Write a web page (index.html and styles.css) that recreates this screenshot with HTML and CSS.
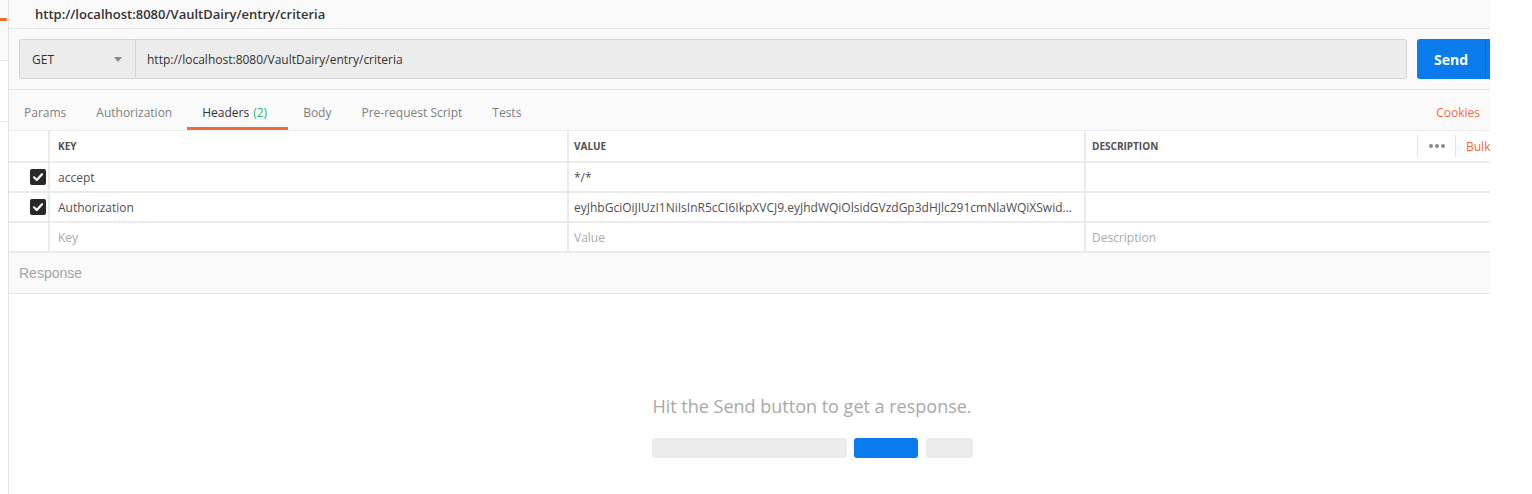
FILE: index.html
```html
<!DOCTYPE html>
<html lang="en">
<head>
<meta charset="utf-8">
<title>Postman request</title>
<link rel="stylesheet" href="styles.css">
</head>
<body>
<div class="app">
  <aside class="sidebar">
    <div class="side-top"><div class="side-mark"></div></div>
    <div class="side-item"></div>
  </aside>
  <main class="main">
    <div class="titlebar">http://localhost:8080/VaultDairy/entry/criteria</div>
    <div class="urlrow">
      <div class="method">GET<span class="caret"></span></div>
      <div class="urlinput">http://localhost:8080/VaultDairy/entry/criteria</div>
      <div class="send"><span class="send-main">Send</span><span class="send-drop"></span></div>
    </div>
    <div class="tabs">
      <div class="tab">Params</div>
      <div class="tab">Authorization</div>
      <div class="tab active">Headers <span class="count">(2)</span></div>
      <div class="tab">Body</div>
      <div class="tab">Pre-request Script</div>
      <div class="tab">Tests</div>
      <div class="tab-right">
        <span class="link">Cookies</span>
        <span class="link clip">Code</span>
      </div>
    </div>
    <div class="table">
      <div class="row head">
        <div class="cell chk"></div>
        <div class="cell key">KEY</div>
        <div class="cell val">VALUE</div>
        <div class="cell desc">DESCRIPTION
          <div class="head-tools">
            <span class="sep"></span>
            <span class="dots"><i></i><i></i><i></i></span>
            <span class="sep"></span>
            <span class="link clip bulk">Bulk Edit</span>
          </div>
        </div>
      </div>
      <div class="row">
        <div class="cell chk"><span class="box"><svg width="16" height="16" viewBox="0 0 16 16"><path d="M4 8.3 L6.8 11 L12 5.2" fill="none" stroke="#fff" stroke-width="2.2" stroke-linecap="round" stroke-linejoin="round"/></svg></span></div>
        <div class="cell key">accept</div>
        <div class="cell val">*/*</div>
        <div class="cell desc"></div>
      </div>
      <div class="row">
        <div class="cell chk"><span class="box"><svg width="16" height="16" viewBox="0 0 16 16"><path d="M4 8.3 L6.8 11 L12 5.2" fill="none" stroke="#fff" stroke-width="2.2" stroke-linecap="round" stroke-linejoin="round"/></svg></span></div>
        <div class="cell key">Authorization</div>
        <div class="cell val">eyJhbGciOiJIUzI1NiIsInR5cCI6IkpXVCJ9.eyJhdWQiOlsidGVzdGp3dHJlc291cmNlaWQiXSwid...</div>
        <div class="cell desc"></div>
      </div>
      <div class="row">
        <div class="cell chk"></div>
        <div class="cell key ph">Key</div>
        <div class="cell val ph">Value</div>
        <div class="cell desc ph">Description</div>
      </div>
    </div>
    <div class="response">Response</div>
    <div class="empty">
      <div class="empty-text">Hit the Send button to get a response.</div>
      <div class="bars">
        <span class="bar gray wide"></span>
        <span class="bar blue"></span>
        <span class="bar gray small"></span>
      </div>
    </div>
  </main>
</div>
</body>
</html>
```
FILE: styles.css
```css
* { box-sizing: border-box; }
html, body { margin: 0; padding: 0; background: #fff; }
body { font-family: "Open Sans", "Liberation Sans", sans-serif; color: #505050; }

.app { display: flex; height: 494px; overflow: hidden; }

.sidebar { width: 9px; flex: none; border-right: 1px solid #e2e2e2; background: #fff; }
.side-top { height: 61px; background: #fafafa; border-bottom: 1px solid #e6e6e6; padding-top: 18px; }
.side-mark { height: 3px; width: 7px; background: #f26b3a; }
.side-item { height: 61px; border-bottom: 1px solid #e6e6e6; }

.main { width: 1481px; flex: none; overflow: hidden; display: flex; flex-direction: column; background: #fff; }

.titlebar { height: 29px; line-height: 28px; padding-left: 26px; background: #fafafa; border-bottom: 1px solid #e6e6e6; font-size: 13px; font-weight: 600; color: #333; white-space: nowrap; }

.urlrow { display: flex; height: 61px; padding: 10px 0 10px 10px; background: #fafafa; border-bottom: 1px solid #e6e6e6; }
.method { width: 116px; flex: none; height: 40px; display: flex; align-items: center; justify-content: space-between; padding: 0 13px 0 12px; background: #ececec; border: 1px solid #d6d6d6; border-right: none; border-radius: 3px 0 0 3px; font-size: 12px; color: #333; }
.caret { width: 0; height: 0; border-left: 4px solid transparent; border-right: 4px solid transparent; border-top: 5px solid #888; }
.urlinput { width: 1272px; flex: none; height: 40px; display: flex; align-items: center; padding-left: 11px; background: #ececec; border: 1px solid #d6d6d6; border-radius: 0 3px 3px 0; font-size: 12px; color: #333; white-space: nowrap; }
.send { flex: none; margin-left: 10px; width: 100px; height: 40px; display: flex; background: #097bed; border-radius: 3px; color: #fff; }
.send-main { width: 69px; display: flex; align-items: center; justify-content: center; font-size: 14px; font-weight: 700; border-right: 1px solid #0a66c6; }
.send-drop { flex: 1; }

.tabs { display: flex; height: 40px; background: #fafafa; }
.tab { height: 40px; padding: 7px 15px 0; border-bottom: 3px solid transparent; display: flex; align-items: center; font-size: 12px; color: #808080; white-space: nowrap; }
.tab.active { border-bottom-color: #f26b3a; color: #333; }
.count { color: #26b47f; margin-left: 4px; margin-right: 6px; }
.tab-right { margin-left: auto; display: flex; align-items: center; gap: 10px; padding-top: 7px; padding-bottom: 3px; }
.link { font-size: 12px; color: #f26b3a; white-space: nowrap; }
.clip { width: 0; overflow: visible; }

.table { border-top: 1px solid #ececec; background: #fff; }
.row { display: flex; height: 30px; border-bottom: 2px solid #ebebeb; }
.row.head { height: 32px; }
.cell { display: flex; align-items: center; font-size: 12px; color: #505050; white-space: nowrap; overflow: hidden; border-right: 2px solid #ebebeb; }
.cell.chk { width: 41px; flex: none; justify-content: flex-end; padding-right: 2px; }
.cell.key { width: 519px; flex: none; padding-left: 8px; }
.cell.val { width: 517px; flex: none; padding-left: 5px; }
.cell.desc { flex: 1; padding-left: 6px; border-right: none; position: relative; overflow: visible; }
.row.head .cell { font-size: 10px; font-weight: 700; color: #505050; }
.cell.ph { color: #aaa; }
.box { width: 16px; height: 16px; background: #282828; border-radius: 2px; display: flex; }

.head-tools { margin-left: auto; display: flex; align-items: center; height: 100%; }
.sep { width: 1px; height: 22px; background: #e3e3e3; }
.dots { display: flex; gap: 2px; padding: 0 10px 0 11px; }
.dots i { width: 4px; height: 4px; border-radius: 50%; background: #888; }
.bulk { margin-left: 10px; margin-right: 24px; font-weight: 400; font-size: 12px; }

.response { height: 41px; padding-left: 10px; display: flex; align-items: center; background: #fafafa; border-bottom: 1px solid #e6e6e6; font-family: "Liberation Sans", Arial, sans-serif; font-size: 14px; color: #a5a5a5; }

.empty { flex: 1; padding: 100px 0 0 125px; display: flex; flex-direction: column; align-items: center; }
.empty-text { font-size: 18px; line-height: 24px; color: #a9a9a9; white-space: nowrap; }
.bars { display: flex; gap: 7px; margin-top: 20px; }
.bar { height: 20px; border-radius: 3px; display: block; }
.bar.gray { background: #ececec; }
.bar.wide { width: 195px; }
.bar.blue { width: 64px; background: #097bed; margin-right: 1px; }
.bar.small { width: 47px; }
```
